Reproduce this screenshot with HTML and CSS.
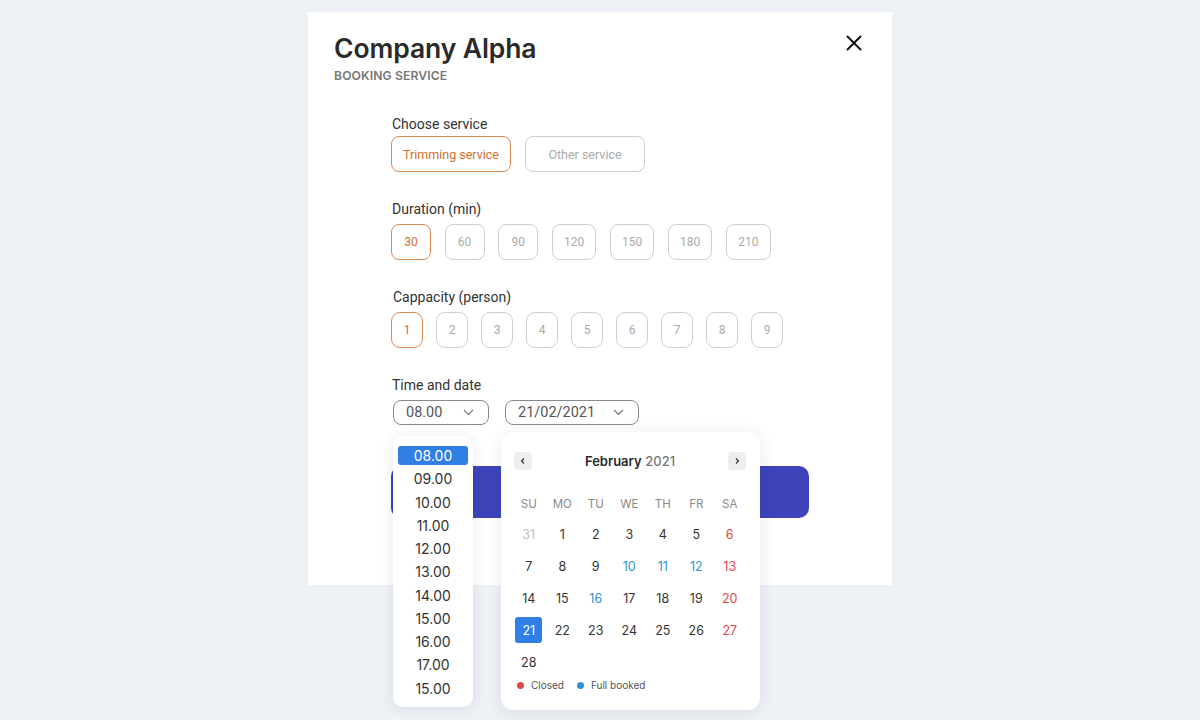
FILE: index.html
```html
<!DOCTYPE html>
<html>
<head>
<meta charset="utf-8">
<link rel="stylesheet" href="styles.css">
</head>
<body>
<div class="card">
  <div class="header">
    <div class="titles">
      <h1 class="title">Company Alpha</h1>
      <div class="subtitle">BOOKING SERVICE</div>
    </div>
    <button class="close" aria-label="Close">
      <svg width="16" height="16" viewBox="0 0 16 16"><path d="M1.5 1.5 L14.5 14.5 M14.5 1.5 L1.5 14.5" stroke="#111" stroke-width="2" fill="none" stroke-linecap="round"/></svg>
    </button>
  </div>

  <div class="form">
    <div class="section">
      <div class="label">Choose service</div>
      <div class="row services">
        <div class="opt service active">Trimming service</div>
        <div class="opt service">Other service</div>
      </div>
    </div>

    <div class="section">
      <div class="label">Duration (min)</div>
      <div class="row durations">
        <div class="opt dur active">30</div>
        <div class="opt dur">60</div>
        <div class="opt dur">90</div>
        <div class="opt dur wide">120</div>
        <div class="opt dur wide">150</div>
        <div class="opt dur wide">180</div>
        <div class="opt dur wide">210</div>
      </div>
    </div>

    <div class="section">
      <div class="label lbl-cap">Cappacity (person)</div>
      <div class="row caps">
        <div class="opt cap active">1</div>
        <div class="opt cap">2</div>
        <div class="opt cap">3</div>
        <div class="opt cap">4</div>
        <div class="opt cap">5</div>
        <div class="opt cap">6</div>
        <div class="opt cap">7</div>
        <div class="opt cap">8</div>
        <div class="opt cap">9</div>
      </div>
    </div>

    <div class="section timedate">
      <div class="label">Time and date</div>
      <div class="row selects">
        <div class="select sel-time"><span>08.00</span>
          <svg width="11" height="7" viewBox="0 0 11 7"><path d="M1 1 L5.5 5.5 L10 1" stroke="#777" stroke-width="1.2" fill="none"/></svg>
        </div>
        <div class="select sel-date"><span>21/02/2021</span>
          <svg width="11" height="7" viewBox="0 0 11 7"><path d="M1 1 L5.5 5.5 L10 1" stroke="#777" stroke-width="1.2" fill="none"/></svg>
        </div>
      </div>

      <div class="submit"></div>

      <div class="time-list">
        <div class="t-item selected">08.00</div>
        <div class="t-item">09.00</div>
        <div class="t-item">10.00</div>
        <div class="t-item">11.00</div>
        <div class="t-item">12.00</div>
        <div class="t-item">13.00</div>
        <div class="t-item">14.00</div>
        <div class="t-item">15.00</div>
        <div class="t-item">16.00</div>
        <div class="t-item">17.00</div>
        <div class="t-item">15.00</div>
      </div>

      <div class="calendar">
        <div class="cal-head">
          <div class="nav"><svg width="8" height="8" viewBox="0 0 8 8"><path d="M5 1.5 L2.5 4 L5 6.5" stroke="#333" stroke-width="1.2" fill="none"/></svg></div>
          <div class="month"><b>February</b> <span>2021</span></div>
          <div class="nav"><svg width="8" height="8" viewBox="0 0 8 8"><path d="M3 1.5 L5.5 4 L3 6.5" stroke="#333" stroke-width="1.2" fill="none"/></svg></div>
        </div>
        <div class="grid">
          <div class="wd">SU</div><div class="wd">MO</div><div class="wd">TU</div><div class="wd">WE</div><div class="wd">TH</div><div class="wd">FR</div><div class="wd">SA</div>
          <div class="d muted">31</div><div class="d">1</div><div class="d">2</div><div class="d">3</div><div class="d">4</div><div class="d">5</div><div class="d red">6</div>
          <div class="d">7</div><div class="d">8</div><div class="d">9</div><div class="d blue">10</div><div class="d blue">11</div><div class="d blue">12</div><div class="d red">13</div>
          <div class="d">14</div><div class="d">15</div><div class="d blue">16</div><div class="d">17</div><div class="d">18</div><div class="d">19</div><div class="d red">20</div>
          <div class="d"><span class="sel">21</span></div><div class="d">22</div><div class="d">23</div><div class="d">24</div><div class="d">25</div><div class="d">26</div><div class="d red">27</div>
          <div class="d">28</div>
        </div>
        <div class="legend">
          <span class="dot dot-red"></span><span class="lg">Closed</span>
          <span class="dot dot-blue"></span><span class="lg">Full booked</span>
        </div>
      </div>
    </div>
  </div>
</div>
</body>
</html>
```

FILE: styles.css
```css
* { box-sizing: border-box; }
html, body { margin: 0; padding: 0; }
body {
  background: #eef1f5;
  font-family: Inter, "Noto Sans", sans-serif;
  color: #333;
  width: 1200px;
  height: 720px;
  overflow: hidden;
}
.card {
  width: 584px;
  height: 573px;
  margin: 12px auto 0;
  background: #fff;
  padding: 19px 30px 0 26px;
}
.header {
  display: flex;
  justify-content: space-between;
  align-items: flex-start;
}
.title {
  margin: 0;
  font-size: 26.5px;
  line-height: 34px;
  font-weight: 600;
  color: #2a2a2a;
  letter-spacing: -0.1px;
}
.subtitle {
  margin-top: 3px;
  font-size: 12.2px;
  line-height: 16px;
  font-weight: 600;
  color: #777;
  letter-spacing: 0.1px;
}
.close {
  border: 0;
  background: none;
  padding: 0;
  margin-top: 4px;
  width: 16px;
  height: 16px;
  display: block;
}
.close svg { display: block; }
.form {
  padding-left: 57px;
  margin-top: 31px;
  font-family: Roboto, "Noto Sans", sans-serif;
}
.section { margin-bottom: 28px; }
.label {
  font-size: 14px;
  line-height: 18px;
  color: #333;
  margin-bottom: 3px;
  margin-left: 1px;
}
.lbl-cap { margin-left: 2px; }
.row { display: flex; }
.opt {
  height: 36px;
  border: 1px solid #cfcfcf;
  border-radius: 8px;
  display: flex;
  align-items: center;
  justify-content: center;
  font-size: 12px;
  color: #aaa;
}
.opt.active {
  border-color: #d98b55;
  color: #d2702c;
}
.services { gap: 14px; }
.service { width: 120px; font-size: 12.5px; }
.section:nth-child(2) .label, .section:nth-child(3) .label { margin-bottom: 6px; }
.durations { gap: 13.6px; }
.dur { width: 40px; }
.dur.wide { width: 44.5px; }
.caps { gap: 13px; }
.cap { width: 32px; border-radius: 9px; }

.timedate { position: relative; }
.timedate .label { margin-bottom: 6px; }
.selects { gap: 16px; padding-left: 2px; }
.select {
  height: 25px;
  border: 1px solid #8a8a8a;
  border-radius: 8px;
  display: flex;
  align-items: center;
  justify-content: space-between;
  padding: 0 14px 0 12px;
  font-size: 14.5px;
  color: #555;
}
.select svg { display: block; }
.sel-time { width: 96px; }
.sel-date { width: 134px; }
.submit {
  margin-top: 41px;
  width: 418px;
  height: 52px;
  background: #3d44b8;
  border-radius: 10px;
}
.time-list {
  position: absolute;
  left: 2px;
  top: 60px;
  width: 80px;
  height: 271px;
  background: #fff;
  border-radius: 10px;
  box-shadow: 0 2px 14px rgba(30, 40, 80, 0.10);
  padding: 10px 5px 5px;
  display: flex;
  flex-direction: column;
  gap: 4.25px;
  font-family: Inter, "Noto Sans", sans-serif;
}
.t-item {
  height: 19px;
  line-height: 19px;
  text-align: center;
  font-size: 14px;
  color: #333;
  border-radius: 3px;
}
.t-item.selected {
  background: #2f7fe6;
  color: #fff;
}
.calendar {
  position: absolute;
  left: 110px;
  top: 56px;
  width: 259px;
  height: 278px;
  background: #fff;
  border-radius: 12px;
  box-shadow: 0 2px 16px rgba(30, 40, 80, 0.10);
  padding: 20px 13px 0 11px;
  font-family: Inter, "Noto Sans", sans-serif;
}
.cal-head {
  display: flex;
  align-items: center;
  justify-content: space-between;
  height: 18px;
  padding: 0 1px 0 2px;
}
.nav {
  width: 18px;
  height: 18px;
  background: #eeeeef;
  border-radius: 4px;
  display: flex;
  align-items: center;
  justify-content: center;
}
.nav svg { display: block; }
.month {
  font-size: 13px;
  color: #2a2a2a;
  margin-left: 0;
}
.month b { font-weight: 600; }
.month span { color: #777; font-weight: 500; }
.grid {
  margin-top: 20px;
  display: grid;
  grid-template-columns: repeat(7, 33.5px);
  grid-template-rows: 28px repeat(5, 32px);
}
.wd {
  font-size: 11.5px;
  color: #8a8a8a;
  font-weight: 400;
  display: flex;
  align-items: center;
  justify-content: center;
}
.d {
  font-size: 12.5px;
  color: #333;
  display: flex;
  align-items: center;
  justify-content: center;
}
.d.muted { color: #bdbdbd; }
.d.red { color: #e0474c; }
.d.blue { color: #2f93cf; }
.sel {
  width: 27px;
  height: 26px;
  border-radius: 3px;
  background: #2f7fe6;
  color: #fff;
  display: flex;
  align-items: center;
  justify-content: center;
}
.legend {
  display: flex;
  align-items: center;
  height: 14px;
  padding-left: 5px;
  font-size: 10px;
  color: #555;
}
.dot {
  width: 7px;
  height: 7px;
  border-radius: 50%;
  display: inline-block;
  margin-right: 7px;
}
.dot-red { background: #e0474c; }
.dot-blue { background: #2f93cf; }
.lg { margin-right: 13px; }
```
